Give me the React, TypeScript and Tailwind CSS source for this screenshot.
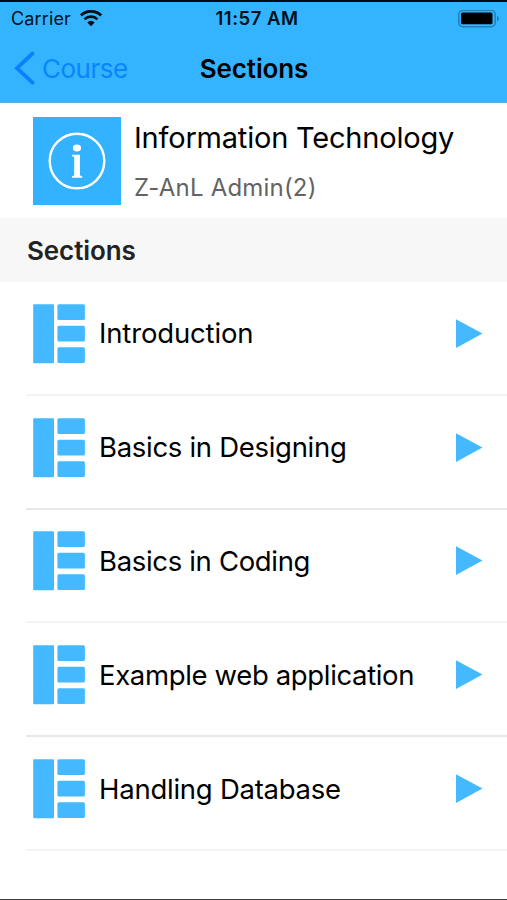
interface Section {
  id: number;
  title: string;
  // glyph spacing differs a little per label
  className: string;
}

const SECTIONS: Section[] = [
  { id: 1, title: 'Introduction', className: 'tracking-[-0.15px]' },
  { id: 2, title: 'Basics in Designing', className: 'tracking-[-0.3px]' },
  { id: 3, title: 'Basics in Coding', className: 'tracking-[-0.33px]' },
  { id: 4, title: 'Example web application', className: 'tracking-[-0.35px]' },
  { id: 5, title: 'Handling Database', className: 'tracking-[-0.25px]' },
];

function WifiIcon() {
  return (
    <svg width="24" height="18" viewBox="0 0 24 18" fill="none">
      <path d="M1.9 5.4a14.4 14.4 0 0 1 20.2 0" stroke="#001018" strokeWidth="3" />
      <path d="M5.5 9.4a9.2 9.2 0 0 1 13 0" stroke="#001018" strokeWidth="2.7" />
      <path d="M12 16.3l-3.7-3.8a5 5 0 0 1 7.4 0z" fill="#001018" />
    </svg>
  );
}

function BatteryIcon() {
  return (
    <svg width="42" height="18" viewBox="0 0 42 18">
      <rect x="0.8" y="0.3" width="36.4" height="16.4" rx="4.2" fill="none" stroke="#2180b6" strokeWidth="1.5" />
      <rect x="3" y="2.5" width="31.5" height="11.8" rx="1.5" fill="#000" />
      <path d="M39 5.7c2.6 1 2.6 4.6 0 5.6z" fill="#2180b6" />
    </svg>
  );
}

function InfoIcon() {
  return (
    <svg width="88" height="88" viewBox="0 0 88 88">
      <circle cx="44" cy="44" r="27.3" fill="none" stroke="#fff" strokeWidth="2.4" />
      <ellipse cx="44" cy="31" rx="4.1" ry="3.4" fill="#fff" />
      <path d="M39 37.8h8v20c0 1 1 1.3 2.2 1.5v1.5H39v-1.5c1.3-.2 2.2-.5 2.2-1.5V40.6c0-.8-.9-1.2-2.2-1.3z" fill="#fff" />
    </svg>
  );
}

function SectionIcon() {
  return (
    <svg width="53" height="60" viewBox="0 0 53 60" fill="#44b9ff">
      <rect x="0.2" y="0.3" width="20.8" height="59" rx="1" />
      <rect x="24.4" y="0.3" width="27.5" height="15.7" rx="1.5" />
      <rect x="24.4" y="21.7" width="27.5" height="15.8" rx="1.5" />
      <rect x="24.4" y="43.2" width="27.5" height="15.9" rx="1.5" />
    </svg>
  );
}

function SectionRow({ section }: { section: Section }) {
  return (
    <li className="ml-[26px] flex h-[113.8px] items-center border-b-2 border-[#f4f4f4] pb-[8px] pl-[6.5px] even:border-[#e8e8e8]">
      <SectionIcon />
      <span className={`ml-[13.5px] flex-1 whitespace-nowrap pb-[1px] text-[27.5px] leading-[32px] ${section.className}`}>
        {section.title}
      </span>
      <svg className="mr-[24.5px]" width="28" height="30" viewBox="0 0 28 30">
        <path d="M1 0.2v28.9L27.5 14.6z" fill="#44b9ff" />
      </svg>
    </li>
  );
}

export default function App() {
  return (
    <div className="flex h-[900px] w-[507px] flex-col overflow-hidden border-t-2 border-b border-t-[#00090f] border-b-[#3c3c3e] bg-white font-['Inter',sans-serif] text-black">
      <header className="flex h-[101px] flex-col border-b border-[#55aede] bg-[#34b4ff]">
        <div className="grid h-[33px] grid-cols-3 items-center pl-[11px] pr-[7px] text-[18px] text-[#001018]">
          <div className="flex items-center gap-[8px]">
            <span className="tracking-[0.15px]">Carrier</span>
            <WifiIcon />
          </div>
          <span className="pl-[3px] text-center text-[18.5px] font-semibold tracking-[0.5px]">11:57 AM</span>
          <div className="flex justify-end">
            <BatteryIcon />
          </div>
        </div>
        <div className="grid h-[66px] grid-cols-3 items-center pl-[14px] pr-[14px] text-[26px]">
          <button className="flex items-center gap-[7px] text-[#0a84ff]">
            <svg width="21" height="34" viewBox="0 0 21 34" fill="none">
              <path d="M18.5 2.5L3 17.2l15.5 14.5" stroke="#0a80ff" strokeWidth="3.8" strokeLinecap="round" />
            </svg>
            <span className="tracking-[-0.5px]">Course</span>
          </button>
          <h1 className="pl-[1px] text-center font-semibold tracking-[-0.1px]">Sections</h1>
        </div>
      </header>

      <section className="flex h-[115px] gap-[13px] pl-[33px] pt-[14px]">
        <div className="h-[88px] w-[88px] bg-[#33b2ff]">
          <InfoIcon />
        </div>
        <div className="flex flex-col whitespace-nowrap pt-[4px]">
          <h2 className="text-[29px] leading-[34px] tracking-[-0.2px]">Information Technology</h2>
          <p className="mt-[18px] text-[24px] leading-[30px] tracking-[0.2px] text-[#636363]">Z-AnL Admin(2)</p>
        </div>
      </section>

      <h3 className="flex h-[64px] items-center bg-[#f7f7f7] pl-[27px] text-[26px] font-semibold tracking-[-0.1px] text-[#222]">
        <span>Sections</span>
      </h3>

      <ul>
        {SECTIONS.map((section) => (
          <SectionRow key={section.id} section={section} />
        ))}
      </ul>
    </div>
  );
}
